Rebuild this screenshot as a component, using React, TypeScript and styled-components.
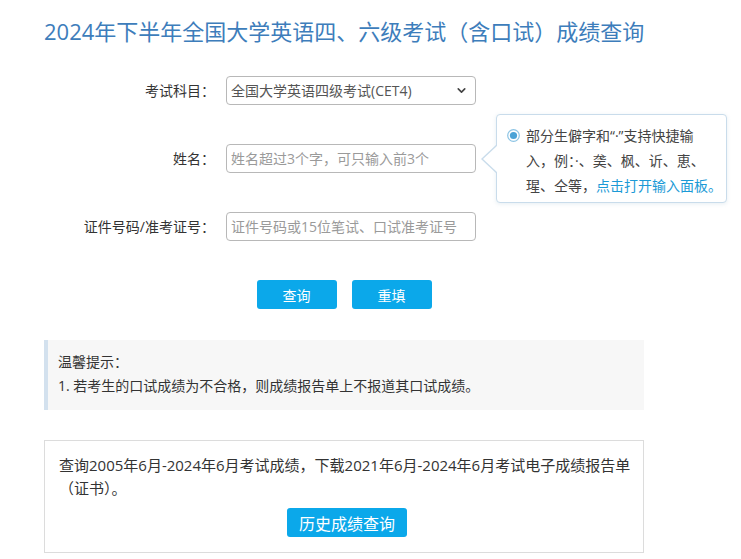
import styled, { createGlobalStyle } from 'styled-components';
import { ChevronDown } from 'lucide-react';

const GlobalStyle = createGlobalStyle`
  body {
    margin: 0;
    background: #fff;
    font-family: "Open Sans", "Noto Sans CJK SC", sans-serif;
    color: #333;
  }
`;

const Page = styled.div`
  width: 600px;
  padding: 16px 0 0 44px;
`;

const Title = styled.h1`
  margin: 0;
  font-size: 22px;
  line-height: 30px;
  font-weight: normal;
  color: #3d7dbb;
  white-space: nowrap;
`;

const Form = styled.div`
  display: grid;
  grid-template-columns: 171px 250px;
  column-gap: 11px;
  row-gap: 39px;
  margin-top: 30px;
`;

const Label = styled.label`
  font-size: 14px;
  line-height: 29px;
  text-align: right;
  color: #333;
  white-space: nowrap;
`;

const Field = styled.div`
  position: relative;
  height: 29px;
`;

const Control = `
  box-sizing: border-box;
  width: 250px;
  height: 29px;
  border: 1px solid #b8b8b8;
  border-radius: 4px;
  padding: 0 4px;
  font-family: "Open Sans", "Noto Sans CJK SC", sans-serif;
  font-size: 14px;
  color: #555;
  background: #fff;
  outline: none;
`;

const Select = styled.select`
  ${Control}
  appearance: none;
  padding-right: 24px;
`;

const Chevron = styled(ChevronDown)`
  position: absolute;
  right: 8px;
  top: 8px;
  color: #444;
  pointer-events: none;
`;

const Input = styled.input`
  ${Control}
  &::placeholder {
    color: #9a9a9a;
  }
`;

const Tooltip = styled.div`
  position: absolute;
  left: 270px;
  top: -30px;
  box-sizing: border-box;
  width: 231px;
  padding: 8px 4px 4px 29px;
  border: 1px solid #c9dceb;
  border-radius: 4px;
  background: #fff;
  box-shadow: 0 1px 4px rgba(120, 160, 190, 0.18);
  font-size: 14px;
  line-height: 25px;
  color: #444;
  white-space: nowrap;

  &::before,
  &::after {
    content: '';
    position: absolute;
    top: 29px;
    border-style: solid;
    border-color: transparent;
  }
  &::before {
    left: -16px;
    border-width: 15px 16px 15px 0;
    border-right-color: #c9dceb;
  }
  &::after {
    left: -14px;
    top: 30px;
    border-width: 14px 15px 14px 0;
    border-right-color: #fff;
  }
`;

const Radio = styled.svg`
  position: absolute;
  left: 10px;
  top: 14px;
`;

const Link = styled.a`
  color: #1b9ad6;
  text-decoration: none;
`;

const Buttons = styled.div`
  display: flex;
  justify-content: center;
  gap: 15px;
  margin-top: 39px;
`;

const Button = styled.button<{ $wide?: boolean }>`
  width: ${p => (p.$wide ? '120px' : '80px')};
  height: 29px;
  border: none;
  border-radius: 3px;
  background: #0ba8ea;
  color: #fff;
  font-family: "Open Sans", "Noto Sans CJK SC", sans-serif;
  font-size: ${p => (p.$wide ? '16px' : '14px')};
  cursor: pointer;
  padding: 0;
`;

const Notice = styled.div`
  margin-top: 31px;
  padding: 10px 10px 12px 10px;
  border-left: 4px solid #d3e1ee;
  background: #f7f7f7;
  font-size: 14px;
  line-height: 24px;
  color: #333;
`;

const HistoryBox = styled.div`
  margin-top: 30px;
  padding: 13px 8px 15px 14px;
  border: 1px solid #dcdcdc;
  font-size: 15px;
  line-height: 23px;
  color: #333;
`;

const Centered = styled.div`
  display: flex;
  justify-content: center;
  margin-top: 8px;
`;

export default function App() {
  return (
    <Page>
      <GlobalStyle />
      <Title>2024年下半年全国大学英语四、六级考试（含口试）成绩查询</Title>

      <Form>
        <Label>考试科目：</Label>
        <Field>
          <Select defaultValue="cet4">
            <option value="cet4">全国大学英语四级考试(CET4)</option>
            <option value="cet6">全国大学英语六级考试(CET6)</option>
          </Select>
          <Chevron size={13} strokeWidth={3} />
        </Field>

        <Label>姓名：</Label>
        <Field>
          <Input placeholder="姓名超过3个字，可只输入前3个" />
          <Tooltip>
            <Radio width="13" height="13" viewBox="0 0 13 13">
              <circle cx="6.5" cy="6.5" r="5.8" fill="#fff" stroke="#8cc4e4" strokeWidth="1.2" />
              <circle cx="6.5" cy="6.5" r="3.6" fill="#4aa2d6" />
            </Radio>
            部分生僻字和“·”支持快捷输
            <br />
            入，例：·、䶮、枫、䜣、恵、
            <br />
            瑆、仝等，<Link href="#">点击打开输入面板。</Link>
          </Tooltip>
        </Field>

        <Label>证件号码/准考证号：</Label>
        <Field>
          <Input placeholder="证件号码或15位笔试、口试准考证号" />
        </Field>
      </Form>

      <Buttons>
        <Button>查询</Button>
        <Button>重填</Button>
      </Buttons>

      <Notice>
        温馨提示：
        <br />
        1. 若考生的口试成绩为不合格，则成绩报告单上不报道其口试成绩。
      </Notice>

      <HistoryBox>
        查询2005年6月-2024年6月考试成绩，下载2021年6月-2024年6月考试电子成绩报告单（证书）。
        <Centered>
          <Button $wide>历史成绩查询</Button>
        </Centered>
      </HistoryBox>
    </Page>
  );
}
